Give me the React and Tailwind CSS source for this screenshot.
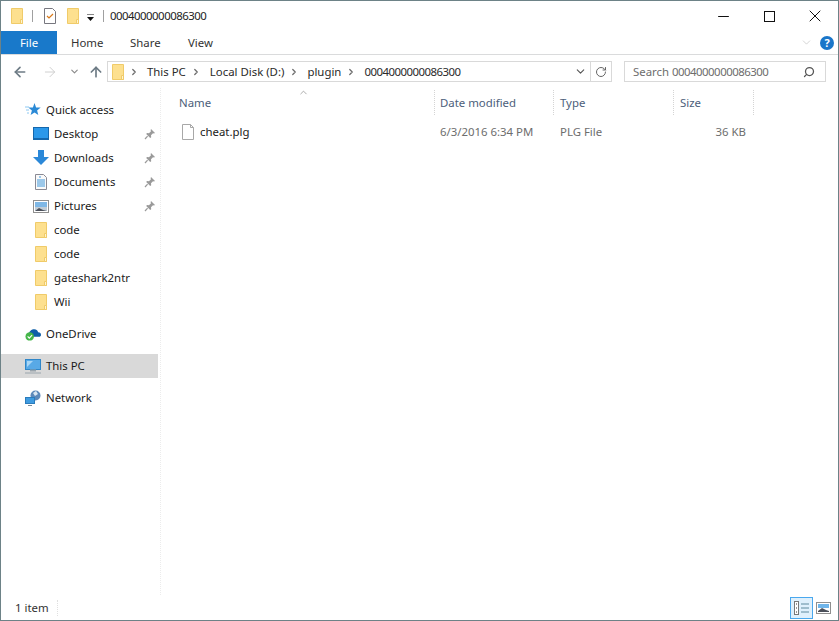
import React from 'react';
import { ArrowLeft, ArrowRight, ArrowUp, ChevronDown, ChevronRight, ChevronUp, RotateCw, Search, Minus, X } from 'lucide-react';

function FolderIcon() {
  return (
    <svg width="14" height="16" viewBox="0 0 14 16" className="shrink-0">
      <path d="M1.5 .5H12.5V15.5H1.5Z" fill="#fde08f" stroke="#f0cb69" />
      <path d="M10.5 11.5H12.5V15.5H10.5Z" fill="#fff4cf" stroke="#f0cb69" />
    </svg>
  );
}

function PinIcon() {
  return (
    <svg width="12" height="12" viewBox="0 0 12 12" className="shrink-0">
      <path d="M7 1l4 4-1 .6-1-.4-2 2 .2 2-1 .8-4-4 .8-1 2 .2 2-2-.4-1z" fill="#9a9a9a" />
      <path d="M3.6 8.2L1 11" stroke="#9a9a9a" strokeWidth="1.2" />
    </svg>
  );
}

function QuickAccessIcon() {
  return (
    <svg width="16" height="16" viewBox="0 0 16 16">
      <path d="M9.5 1l1.6 4.4 4.6.2-3.6 2.9 1.2 4.5-3.8-2.6-3.9 2.6 1.3-4.5-3.6-2.9 4.6-.2z" fill="#2b8ad6" />
      <path d="M0 5h4M1 8h3M2 11h2" stroke="#8cc8f2" strokeWidth="1" />
    </svg>
  );
}

function DesktopIcon() {
  return (
    <svg width="16" height="14" viewBox="0 0 16 14">
      <rect x=".5" y=".5" width="15" height="11" fill="#2b98ea" stroke="#1467ad" />
      <path d="M0 12.5h16" stroke="#1467ad" />
    </svg>
  );
}

function DownloadsIcon() {
  return (
    <svg width="16" height="16" viewBox="0 0 16 16">
      <path d="M5 0h6v7h5l-8 8-8-8h5z" fill="#2b88d8" />
    </svg>
  );
}

function DocumentsIcon() {
  return (
    <svg width="14" height="16" viewBox="0 0 14 16">
      <path d="M1.5.5h8l3 3v12h-11z" fill="#fafafa" stroke="#8a8a94" />
      <path d="M5 3h2M3 6h8M3 8h8M3 10h8M3 12h8" stroke="#3f97da" />
    </svg>
  );
}

function PicturesIcon() {
  return (
    <svg width="16" height="13" viewBox="0 0 16 13">
      <rect x=".5" y=".5" width="15" height="12" fill="#fff" stroke="#8f8f8f" />
      <rect x="2" y="2" width="12" height="5" fill="#7fb8e6" />
      <rect x="2" y="7" width="12" height="4" fill="#c2cdd6" />
      <path d="M2 11l4-3 4 2 4 1z" fill="#4a4f59" />
    </svg>
  );
}

function OneDriveIcon() {
  return (
    <svg width="17" height="13" viewBox="0 0 17 13">
      <path d="M4 7c0-4 3-6 6-6 2 0 3 1 4 3 2 0 3 1 3 3 0 1-1 2-2 2H6z" fill="#0f5fa8" />
      <circle cx="5" cy="8.5" r="4.5" fill="#45b649" />
      <path d="M2.8 8.5l1.7 1.8 3-3.2" stroke="#fff" strokeWidth="1.2" fill="none" />
    </svg>
  );
}

function ThisPcIcon() {
  return (
    <svg width="16" height="15" viewBox="0 0 16 15">
      <rect x=".5" y=".5" width="15" height="10" fill="#58a9e6" stroke="#2f86c8" />
      <path d="M2 2h6l-6 6z" fill="#a9d6f5" />
      <path d="M5 11.5h6" stroke="#9aa5ad" strokeWidth="2" />
      <path d="M0 14h16" stroke="#9aa5ad" />
    </svg>
  );
}

function NetworkIcon() {
  return (
    <svg width="16" height="16" viewBox="0 0 16 16">
      <circle cx="10.5" cy="5.5" r="5" fill="#5d89ba" />
      <path d="M8 3l3-2 2 3-3 2z" fill="#dbe7f2" />
      <rect x=".5" y="7.5" width="9" height="6" fill="#3f9be0" stroke="#2b7cbc" />
      <path d="M3 15.5h4" stroke="#7b8b98" />
    </svg>
  );
}

function NavRow({ icon, label, pinned, active, indent }) {
  return (
    <div className={`h-6 flex items-center relative ${active ? 'bg-[#d9d9d9]' : ''} ${indent ? 'pl-[32px]' : 'pl-[24px]'}`}>
      <div className="flex items-center justify-center shrink-0 w-4 mr-[5px]">{icon}</div>
      <span className="text-[#1a1a1a]">{label}</span>
      {pinned && <div className="absolute left-[143px] top-[6px]"><PinIcon /></div>}
    </div>
  );
}

export default function App() {
  const crumbs = ['This PC', 'Local Disk (D:)', 'plugin', '0004000000086300'];

  return (
    <div className="w-[839px] h-[621px] bg-white border border-[#6d8287] flex flex-col overflow-hidden text-[11.4px] leading-4 text-[#1a1a1a]" style={{ fontFamily: '"Noto Sans", "Open Sans", sans-serif' }}>
      {/* Title bar */}
      <div className="h-[30px] shrink-0 flex items-center pl-[9px]">
        <FolderIcon />
        <div className="w-px h-3 bg-[#a0a0a0] ml-[8px]" />
        <svg width="14" height="16" viewBox="0 0 14 16" className="ml-[10px]">
          <path d="M1.5.5h8l3 3v12h-11z" fill="#fff" stroke="#77777f" />
          <path d="M4 8l2 2 4-4" stroke="#d9791a" strokeWidth="1.2" fill="none" />
        </svg>
        <div className="ml-[9px]"><FolderIcon /></div>
        <svg width="8" height="7" viewBox="0 0 8 7" className="ml-[7px] mt-[3px]">
          <path d="M0 0h7" stroke="#111" />
          <path d="M0 3h7L3.5 7z" fill="#111" />
        </svg>
        <div className="w-px h-3 bg-[#a0a0a0] ml-[8px]" />
        <span className="ml-[6px] text-[#222] tracking-[-0.5px]">0004000000086300</span>
        <div className="ml-auto flex items-center h-full">
          <div className="w-[46px] flex justify-center"><Minus size={17} strokeWidth={1} color="#111" absoluteStrokeWidth /></div>
          <div className="w-[46px] flex justify-center"><div className="w-[11px] h-[11px] border border-[#111]" /></div>
          <div className="w-[46px] flex justify-center"><X size={20} strokeWidth={1} color="#111" absoluteStrokeWidth /></div>
        </div>
      </div>

      {/* Ribbon tabs */}
      <div className="h-6 shrink-0 flex items-stretch border-b border-[#dadbdc]">
        <div className="w-14 h-[23px] bg-[#1979ca] text-white flex items-center justify-center">File</div>
        <div className="flex items-center ml-[14px] text-[#333]">
          <span className="w-[59px]">Home</span>
          <span className="w-[58px]">Share</span>
          <span>View</span>
        </div>
        <div className="ml-auto flex items-center mr-[4px]">
          <ChevronDown size={13} strokeWidth={1} color="#b0b0b0" />
          <div className="ml-[7px] w-[14px] h-[14px] rounded-full bg-[#1a76c9] text-white text-[11px] font-bold flex items-center justify-center">?</div>
        </div>
      </div>

      {/* Address bar */}
      <div className="h-[33px] shrink-0 flex items-center">
        <div className="w-[106px] flex items-center shrink-0 pl-[11px]">
          <ArrowLeft size={16} strokeWidth={2.5} color="#6d7b85" />
          <ArrowRight size={16} strokeWidth={1.5} color="#d0d0d0" className="ml-[14px]" />
          <ChevronDown size={11} strokeWidth={2.5} color="#8a8a8a" className="ml-[11px]" />
          <ArrowUp size={16} strokeWidth={2.5} color="#6d7b85" className="ml-[8px]" />
        </div>
        <div className="w-[505px] h-[21px] border border-[#d9d9d9] flex items-center pl-[3px]">
          <FolderIcon />
          <ChevronRight size={10} strokeWidth={3} color="#6d6d6d" className="ml-[4px] mr-[8px]" />
          <div className="flex items-center">
            <span className="text-[#2a2a2a]">{crumbs[0]}</span>
            <ChevronRight size={10} strokeWidth={3} color="#6d6d6d" className="ml-[5px] mr-[9px]" />
            <span className="text-[#2a2a2a]">{crumbs[1]}</span>
            <ChevronRight size={10} strokeWidth={3} color="#6d6d6d" className="ml-[5px] mr-[8px]" />
            <span className="text-[#2a2a2a]">{crumbs[2]}</span>
            <ChevronRight size={10} strokeWidth={3} color="#6d6d6d" className="ml-[5px] mr-[8px]" />
            <span className="text-[#2a2a2a] tracking-[-0.5px]">{crumbs[3]}</span>
          </div>
          <ChevronDown size={13} strokeWidth={2} color="#555" className="ml-auto mr-[2px]" />
          <div className="h-full w-[21px] border-l border-[#d9d9d9] flex items-center justify-center ml-[1px]">
            <RotateCw size={12} strokeWidth={2} color="#666" />
          </div>
        </div>
        <div className="ml-3 w-[202px] h-[21px] border border-[#d9d9d9] flex items-center pl-2 pr-[10px] text-[#6d6d6d]">
          <span>Search <span className="tracking-[-0.5px]">0004000000086300</span></span>
          <Search size={12} strokeWidth={2.5} color="#555" className="ml-auto -scale-x-100" />
        </div>
      </div>

      {/* Body */}
      <div className="flex-1 flex min-h-0">
        <div className="w-[157px] shrink-0 pt-[10px]">
          <NavRow icon={<QuickAccessIcon />} label="Quick access" />
          <NavRow icon={<DesktopIcon />} label="Desktop" pinned indent />
          <NavRow icon={<DownloadsIcon />} label="Downloads" pinned indent />
          <NavRow icon={<DocumentsIcon />} label="Documents" pinned indent />
          <NavRow icon={<PicturesIcon />} label="Pictures" pinned indent />
          <NavRow icon={<FolderIcon />} label="code" indent />
          <NavRow icon={<FolderIcon />} label="code" indent />
          <NavRow icon={<FolderIcon />} label="gateshark2ntr" indent />
          <NavRow icon={<FolderIcon />} label="Wii" indent />
          <div className="h-2" />
          <NavRow icon={<OneDriveIcon />} label="OneDrive" />
          <div className="h-2" />
          <NavRow icon={<ThisPcIcon />} label="This PC" active />
          <div className="h-2" />
          <NavRow icon={<NetworkIcon />} label="Network" />
        </div>

        <div className="flex-1 pl-[18px] ml-[2px] border-l border-dotted border-[#ececec] relative">
          <ChevronUp size={11} strokeWidth={1.5} color="#888" className="absolute left-[137px] top-[-1px]" />
          <div className="grid grid-cols-[256px_119px_120px_80px] mt-[2px] h-[25px] text-[#4c607a]">
            <div className="flex items-center border-r border-dotted border-[#d4d4d4]">Name</div>
            <div className="flex items-center pl-[5px] border-r border-dotted border-[#d4d4d4]">Date modified</div>
            <div className="flex items-center pl-[6px] border-r border-dotted border-[#d4d4d4]">Type</div>
            <div className="flex items-center pl-[6px] border-r border-dotted border-[#d4d4d4]">Size</div>
          </div>
          <div className="grid grid-cols-[256px_119px_120px_72px] mt-[6px] h-[22px] items-center text-[#6d6d6d]">
            <div className="flex items-center pl-[2px] text-[#1a1a1a]">
              <svg width="14" height="16" viewBox="0 0 14 16">
                <path d="M1.5.5h8l3 3v12h-11z" fill="#fff" stroke="#a8a8a8" />
                <path d="M9.5.5v3h3" fill="none" stroke="#a8a8a8" />
              </svg>
              <span className="ml-[5px]">cheat.plg</span>
            </div>
            <div className="pl-[5px]">6/3/2016 6:34 PM</div>
            <div className="pl-[6px]">PLG File</div>
            <div className="text-right">36 KB</div>
          </div>
        </div>
      </div>

      {/* Status bar */}
      <div className="h-[25px] shrink-0 flex items-center pl-[14px]">
        <span className="text-[#333] w-[43px] border-r border-dotted border-[#e0e0e0]">1 item</span>
        <div className="ml-auto flex items-center mr-[7px] gap-[3px]">
          <div className="w-[23px] h-[22px] border border-[#4aa8ee] bg-[#dff0fc] flex items-center justify-center">
            <svg width="15" height="14" viewBox="0 0 15 14">
              <rect x=".5" y=".5" width="4" height="13" fill="#fff" stroke="#777" />
              <path d="M2 3h1M2 7h1M2 11h1" stroke="#333" />
              <path d="M7 3h8M7 7h8M7 11h8" stroke="#5f8a9e" />
            </svg>
          </div>
          <svg width="15" height="12" viewBox="0 0 15 12">
            <rect x=".5" y=".5" width="14" height="11" fill="#fff" stroke="#8f8f8f" />
            <rect x="2" y="2" width="11" height="4" fill="#6fb5ea" />
            <path d="M2 9l4-3 4 2 3 1v1H2z" fill="#4a4f59" />
          </svg>
        </div>
      </div>
    </div>
  );
}
